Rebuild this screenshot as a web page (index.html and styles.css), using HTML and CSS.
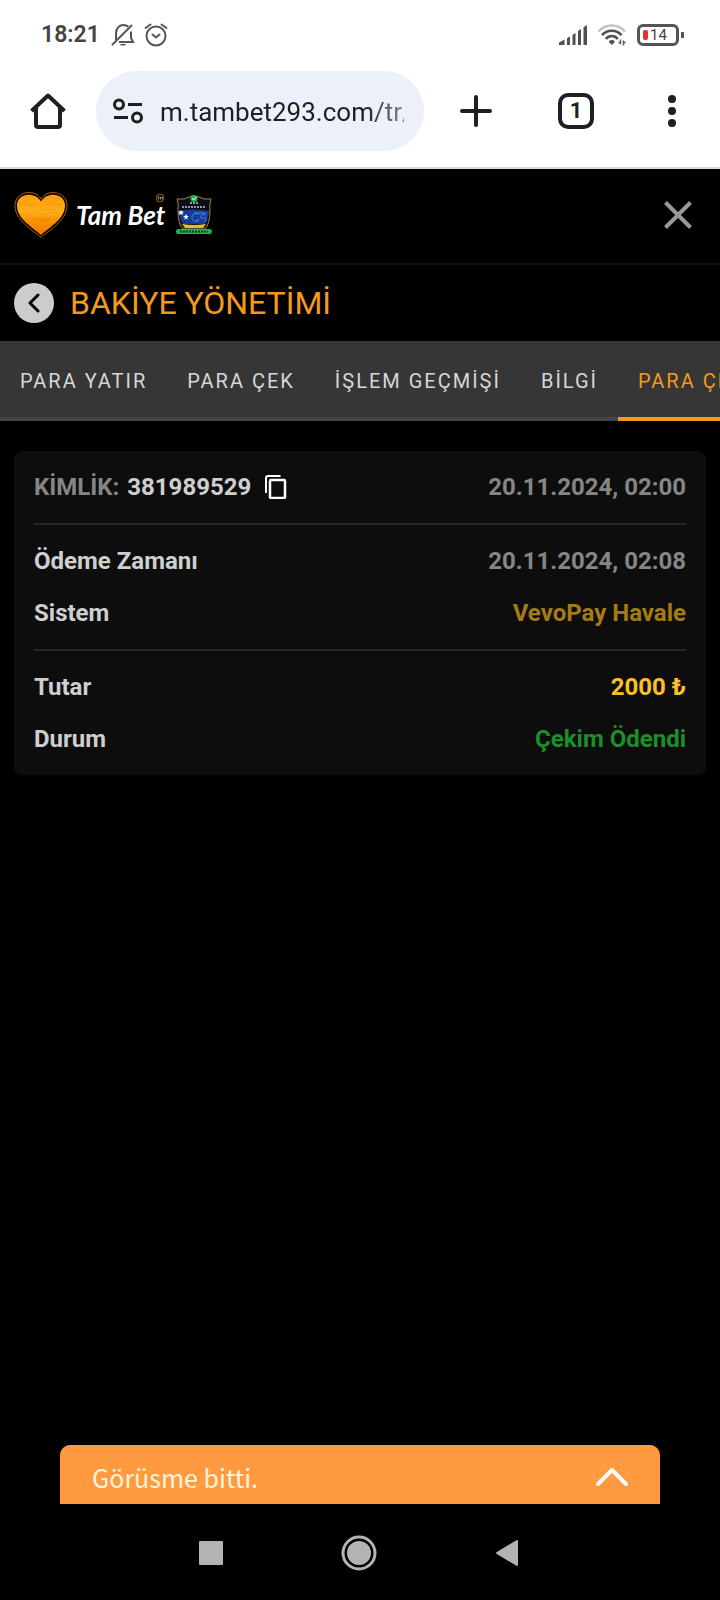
FILE: index.html
```html
<!DOCTYPE html>
<html lang="tr">

<head>
    <meta charset="UTF-8">
    <meta name="viewport" content="width=device-width, initial-scale=1.0">
    <title>Bakiye Yönetimi</title>
    <link rel="stylesheet" href="styles.css">
</head>

<body>
    <!-- status bar -->
    <div class="status">
        <span class="clock">18:21</span>
        <svg class="bell" width="24" height="24" viewBox="0 0 24 24" fill="none" stroke="#555" stroke-width="2">
            <path d="M5 15V10.500C5 5 8.500 2 12.500 2c2 0 3.500.6 4.800 1.800M20 8.500V15l2 4H8" />
            <path d="M1.500 21.500 20.500 2.500" stroke-linecap="round" />
            <path d="M5 15v2" />
            <path d="M9 21h6l-1 1.500h-4z" fill="#555" stroke="none" />
        </svg>
        <svg class="alarm" width="24" height="24" viewBox="0 0 24 24" fill="none" stroke="#555" stroke-width="2" stroke-linecap="round">
            <circle cx="12" cy="13" r="9.500" />
            <path d="M1.500 5 6.500 1.500M22.500 5 17.500 1.500" />
            <path d="m8.500 11.500 3.500 3 3.500-3" />
        </svg>
        <span class="spacer"></span>
        <svg class="signal" width="28" height="20" viewBox="0 0 28 20" fill="#505050">
            <path d="M0 17.500 5.500 14.500V20H0zM8 13.200l3-1.800V20H8zM13.500 9.800l3-1.800V20h-3zM19 6l3-2v16h-3zM24.500 2.200 28 0v20h-3.500z" />
        </svg>
        <svg class="wifi" width="30" height="22" viewBox="0 0 30 22" fill="none" stroke-width="2.600">
            <path d="M1.500 7.500c7-8 19.500-8 26.500 0" stroke="#c4c4c4" />
            <path d="M5 11.200c5-6 14.500-6 19.500 0" stroke="#505050" />
            <path d="M8.800 15c3.200-4 8.800-4 12 0" stroke="#505050" />
            <path d="M14.800 16c1.800 0 2.800.8 3 1.900l-3 3.100-3-3.100c.2-1.100 1.200-1.900 3-1.900z" fill="#505050" />
            <path d="M21.500 18.500h2M23.500 15.500v5M26.500 16.500v5M26.500 18.500h2" stroke="#606060" stroke-width="1.500" />
        </svg>
        <div class="battery">
            <span class="charge"></span>
            <span class="percent">14</span>
        </div>
        <span class="battery-tip"></span>
    </div>

    <!-- browser bar -->
    <div class="browser">
        <button class="home" aria-label="Ana sayfa">
            <svg width="36" height="36" viewBox="0 0 36 36" fill="none" stroke="#1f1f1f" stroke-width="4" stroke-linejoin="round">
                <path d="M1.500 18 18 2.500 34.500 18M6 15v17q0 2 2 2h20q2 0 2-2V15" />
            </svg>
        </button>
        <label class="address">
            <svg width="30" height="26" viewBox="0 0 30 26" fill="none" stroke="#1f1f1f" stroke-width="3">
                <circle cx="6" cy="6.500" r="4.500" />
                <path d="M15 6.500h14M1 19.500h14" />
                <circle cx="24" cy="19.500" r="4.500" />
            </svg>
            <input type="text" value="m.tambet293.com/tr/" aria-label="Adres">
        </label>
        <button class="new-tab" aria-label="Yeni sekme">
            <svg width="32" height="32" viewBox="0 0 32 32" stroke="#1f1f1f" stroke-width="4" stroke-linecap="round">
                <path d="M2 16h28M16 2v28" />
            </svg>
        </button>
        <button class="tabs-count"><span>1</span></button>
        <button class="menu" aria-label="Menü">
            <svg width="8" height="32" viewBox="0 0 8 32" fill="#1f1f1f">
                <circle cx="4" cy="4" r="4" />
                <circle cx="4" cy="16" r="4" />
                <circle cx="4" cy="28" r="4" />
            </svg>
        </button>
    </div>

    <header>
        <a class="logo" href="#">
            <svg width="54" height="48" viewBox="0 0 54 48">
                <defs>
                    <linearGradient id="sunset" x1="0" y1="0" x2="0" y2="1">
                        <stop offset="0" stop-color="#ff9d08" />
                        <stop offset=".45" stop-color="#ffb01c" />
                        <stop offset=".6" stop-color="#f99407" />
                        <stop offset="1" stop-color="#f27a00" />
                    </linearGradient>
                </defs>
                <path d="M27 46.500C20 40 1 30 1 14.500 1 1 20-3.500 27 8 34-3.500 53 1 53 14.500 53 30 34 40 27 46.500z" fill="#120800" stroke="#a35c08" />
                <path d="M27 44C20 37 3 28.500 3 14.500 3 3 20-.5 27 10.500 34-.5 51 3 51 14.500 51 28.500 34 37 27 44z" fill="url(#sunset)" />
                <path d="M5 14q5-3 9 0t9-1M30 15q7-4 18-1M7 23h8l4-2 9 3 6-2h12M18 28h18l-3 2H22M28 19h12" fill="none" stroke="#e8790a" opacity=".4" />
            </svg>
            <span class="brand">Tam Bet
                <svg class="seal" width="10" height="10" viewBox="0 0 10 10">
                    <circle cx="5" cy="5" r="4" fill="#111" stroke="#8a5a1c" />
                    <path d="M2.500 4h2M3.500 4v2.500M5.500 6.500V4l1 1 1-1v2.500" fill="none" stroke="#b99b74" stroke-width=".8" />
                </svg>
            </span>
            <svg width="36" height="40" viewBox="0 0 36 40">
                <path d="M1 4q8 1 12-2 5-3 10 0 4 3 12 2-2 6-1 11 0 14-5 19H7Q2 29 2 15 3 9 1 4z" fill="#0b0d18" stroke="#a8843c" />
                <path d="M3 16q14-3 30 0-1 8-4 13H7q-4-6-4-13z" fill="#123c9a" />
                <path d="M6 29q12 2 24 0l-3 4H9z" fill="#e4c318" />
                <path d="m10 19 1 2h2l-2 1.500 1 2-2-1-2 1 1-2L7 21h2zM5 15l1 1.500h2L6.500 18l.5 2-2-1-2 1 .5-2L2 16.500h2z" fill="#fff" />
                <path d="M23 20a4 4 0 1 0 0 5h-3M30 20q-4-2-5 1t3 2 1 4M18 18h12" fill="none" stroke="#4f83d8" />
                <path d="M14 8h8M6 12h24" stroke="#c5c8d4" stroke-width="1.500" stroke-dasharray="2 1" />
                <circle cx="18" cy="3.500" r="3.500" fill="#1fb552" />
                <path d="m16 3 1.500 2L20.500 2" fill="none" stroke="#fff" />
                <rect y="34" width="36" height="5" rx="2.500" fill="#19b35a" />
                <path d="M4 36.500h28" stroke="#063d1c" stroke-width="2" stroke-dasharray="2 1" />
            </svg>
        </a>
        <button class="close" aria-label="Kapat">
            <svg width="28" height="28" viewBox="0 0 28 28" stroke="#999" stroke-width="4">
                <path d="m1.500 1.500 25 25M26.500 1.500l-25 25" />
            </svg>
        </button>
    </header>

    <div class="title">
        <button class="back" aria-label="Geri">
            <svg width="12" height="20" viewBox="0 0 12 20" fill="none" stroke="#000" stroke-width="3" stroke-linecap="round" stroke-linejoin="round">
                <path d="M10 2 2 10l8 8" />
            </svg>
        </button>
        <h1>BAKİYE YÖNETİMİ</h1>
    </div>

    <nav class="tabs">
        <a href="#">PARA YATIR</a>
        <a href="#">PARA ÇEK</a>
        <a href="#">İŞLEM GEÇMİŞİ</a>
        <a href="#">BİLGİ</a>
        <a href="#" class="active">PARA ÇEKME DURUMU</a>
    </nav>

    <main>
        <section class="card">
            <div class="group">
                <div class="row">
                    <div class="id">
                        <span class="muted">KİMLİK:</span>
                        <span>381989529</span>
                        <button class="copy" aria-label="Kopyala">
                            <svg width="22" height="24" viewBox="0 0 22 24" fill="none" stroke="#fff" stroke-width="2">
                                <path d="M1 18V3q0-2 2-2h12.500" />
                                <rect x="5" y="5" width="15" height="18" rx="1" stroke-width="2.500" />
                            </svg>
                        </button>
                    </div>
                    <span class="muted">20.11.2024, 02:00</span>
                </div>
            </div>
            <div class="group">
                <div class="row">
                    <span>Ödeme Zamanı</span>
                    <span class="muted">20.11.2024, 02:08</span>
                </div>
                <div class="row">
                    <span>Sistem</span>
                    <span class="system">VevoPay Havale</span>
                </div>
            </div>
            <div class="group">
                <div class="row">
                    <span>Tutar</span>
                    <span class="amount">2000 ₺</span>
                </div>
                <div class="row">
                    <span>Durum</span>
                    <span class="paid">Çekim Ödendi</span>
                </div>
            </div>
        </section>
    </main>

    <button class="chat">
        <span>Görüsme bitti.</span>
        <svg width="32" height="18" viewBox="0 0 32 18" fill="none" stroke="#fff" stroke-width="4" stroke-linecap="round" stroke-linejoin="round">
            <path d="M2 16 16 2l14 14" />
        </svg>
    </button>

    <!-- system buttons -->
    <div class="system-nav">
        <button aria-label="Son uygulamalar">
            <svg width="24" height="24" viewBox="0 0 24 24">
                <rect width="24" height="24" rx="1" fill="#b3b3b3" />
            </svg>
        </button>
        <button aria-label="Ana ekran">
            <svg width="36" height="36" viewBox="0 0 36 36">
                <circle cx="18" cy="18" r="16" fill="none" stroke="#b3b3b3" stroke-width="3" />
                <circle cx="18" cy="18" r="12" fill="#b3b3b3" />
            </svg>
        </button>
        <button aria-label="Geri">
            <svg width="24" height="28" viewBox="0 0 24 28">
                <path d="M22 2v24L2 14z" fill="#b3b3b3" stroke="#b3b3b3" stroke-width="2" stroke-linejoin="round" />
            </svg>
        </button>
    </div>
</body>

</html>
```
FILE: styles.css
```css
* {
    box-sizing: border-box;
}

body,
h1 {
    margin: 0;
    padding: 0;
}

body {
    min-height: 100vh;
    display: flex;
    flex-direction: column;
    background-color: #000;
    color: #cfcfcf;
    font-family: Roboto, "Liberation Sans", sans-serif;
    overflow-x: hidden;
}

button {
    padding: 0;
    border: none;
    background: none;
    font-family: inherit;
    color: inherit;
    display: flex;
    align-items: center;
    justify-content: center;
    cursor: pointer;
}

a {
    color: inherit;
    text-decoration: none;
}

svg {
    display: block;
    flex-shrink: 0;
}

/* status bar */
.status {
    height: 71px;
    padding: 0 36px 2px 41px;
    display: flex;
    align-items: center;
    background-color: #fff;
    color: #444;
}

.clock {
    font-size: 23px;
    font-weight: 600;
}

.bell {
    margin-left: 11px;
}

.alarm {
    margin-left: 9px;
}

.spacer {
    flex: 1;
}

.wifi {
    margin: 0 10px;
}

.battery {
    width: 42px;
    height: 22px;
    padding-left: 3px;
    display: flex;
    align-items: center;
    border: 3px solid #555;
    border-radius: 6px;
}

.charge {
    width: 5px;
    height: 10px;
    border-radius: 2px;
    background-color: #e53030;
}

.percent {
    margin-left: 2px;
    font-size: 15px;
    line-height: 16px;
}

.battery-tip {
    width: 3px;
    height: 6px;
    margin-left: 2px;
    background-color: #555;
}

/* browser bar */
.browser {
    height: 98px;
    padding-bottom: 16px;
    display: flex;
    background-color: #fff;
    border-bottom: 2px solid #ddd;
    color: #1f1f1f;
}

.home,
.tabs-count,
.menu {
    width: 96px;
}

.new-tab {
    width: 104px;
}

.address {
    flex: 1;
    min-width: 0;
    padding: 0 20px 0 17px;
    display: flex;
    align-items: center;
    gap: 17px;
    background-color: #ebf0f9;
    border-radius: 40px;
}

.address input {
    flex: 1;
    min-width: 0;
    padding: 2px 0 0;
    border: none;
    outline: none;
    background: none;
    color: inherit;
    font-family: inherit;
    font-size: 26px;
    mask-image: linear-gradient(to left, rgba(0, 0, 0, .5), #000 40px);
}

.tabs-count span {
    width: 36px;
    height: 36px;
    border: 4px solid #1f1f1f;
    border-radius: 10px;
    font-size: 22px;
    font-weight: 700;
    line-height: 28px;
}

/* site header */
header {
    height: 96px;
    padding: 0 28px 2px 14px;
    display: flex;
    align-items: center;
    justify-content: space-between;
    border-bottom: 2px solid #101010;
}

.logo {
    display: flex;
    align-items: center;
}

.brand {
    position: relative;
    margin: 0 11px 0 8px;
    color: #fff;
    font-family: Lato, sans-serif;
    font-size: 26px;
    font-style: italic;
    font-weight: 700;
}

.seal {
    position: absolute;
    top: -6px;
    right: 0;
}

.title {
    height: 76px;
    padding: 0 14px;
    display: flex;
    align-items: center;
    gap: 16px;
}

.back {
    width: 40px;
    height: 40px;
    border-radius: 50%;
    background-color: #ccc;
}

h1 {
    color: #f39a1b;
    font-size: 32px;
    font-weight: 400;
}

/* tabs */
.tabs {
    height: 80px;
    display: flex;
    overflow: hidden;
    background-color: #363636;
}

.tabs a {
    flex-shrink: 0;
    padding: 0 20px;
    border-bottom: 4px solid #444;
    color: #d7d7d7;
    font-size: 20px;
    line-height: 80px;
    letter-spacing: 2px;
    white-space: nowrap;
}

.tabs .active {
    color: #f39a1b;
    border-color: #f39a1b;
}

/* payment card */
main {
    flex: 1;
    padding: 30px 14px;
}

.card {
    padding: 0 20px;
    border-radius: 8px;
    background-color: #0d0d0d;
    font-size: 24px;
    font-weight: 700;
}

.group {
    padding: 10px 0;
}

.group + .group {
    border-top: 2px solid #262626;
}

.row {
    height: 52px;
    display: flex;
    align-items: center;
    justify-content: space-between;
}

.id {
    display: flex;
    align-items: center;
    gap: 8px;
}

.copy {
    margin-left: 6px;
}

.muted {
    color: #868686;
}

.system {
    color: #a67c12;
}

.amount {
    color: #ffc023;
}

.paid {
    color: #1c8f2b;
}

/* chat bar */
.chat {
    height: 59px;
    margin: 0 60px;
    padding: 4px 32px 0;
    justify-content: space-between;
    border-radius: 10px 10px 0 0;
    background-color: #ff9a41;
    color: #fff3df;
    font-family: "Noto Sans CJK SC", "Noto Sans", sans-serif;
    font-size: 25px;
}

/* system buttons */
.system-nav {
    height: 96px;
    padding: 2px 2px 0 0;
    display: flex;
    align-items: center;
    justify-content: center;
    gap: 100px;
}

.system-nav button {
    width: 48px;
    height: 48px;
}
```
